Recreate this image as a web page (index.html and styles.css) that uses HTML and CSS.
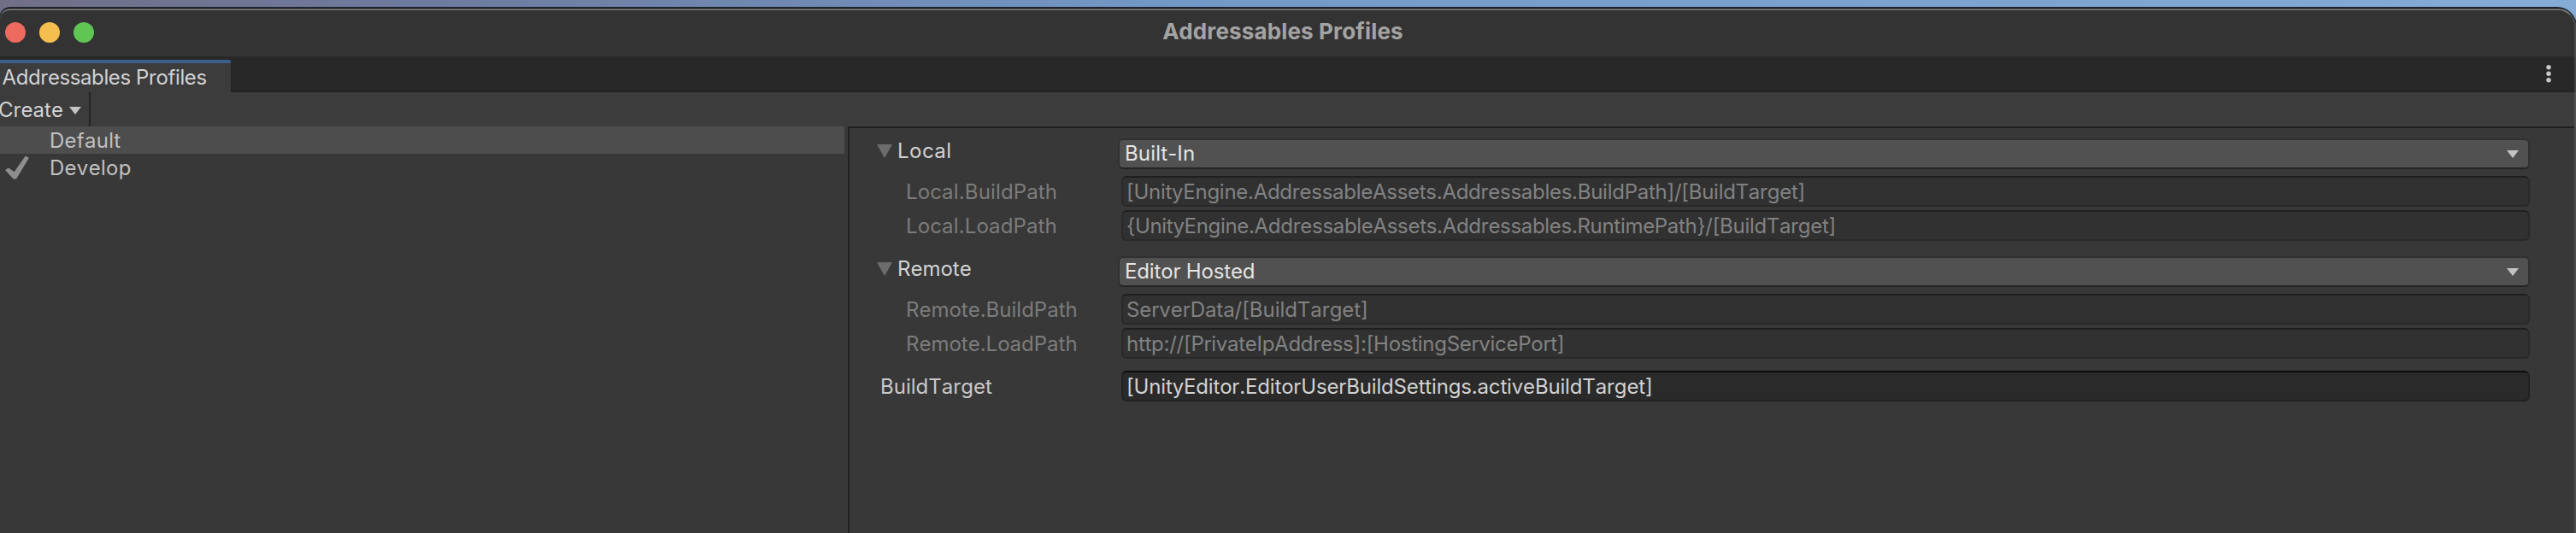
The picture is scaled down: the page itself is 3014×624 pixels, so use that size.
FILE: index.html
```
<!DOCTYPE html>
<html lang="en">
<head>
<meta charset="utf-8">
<title>Addressables Profiles</title>
<link rel="stylesheet" href="styles.css">
</head>
<body>
<div class="desktop">
  <main class="window">
    <header class="titlebar">
      <div class="lights"><i class="light red"></i><i class="light yellow"></i><i class="light green"></i></div>
      <h1 class="title">Addressables Profiles</h1>
    </header>
    <nav class="tabs">
      <div class="tab">Addressables Profiles</div>
      <svg class="kebab" width="6" height="22" viewBox="0 0 6 22"><circle cx="3" cy="2.7" r="2.7"/><circle cx="3" cy="10.2" r="2.7"/><circle cx="3" cy="17.7" r="2.7"/></svg>
    </nav>
    <div class="toolbar">
      <div class="create"><span>Create</span><svg class="arrow" width="14" height="9" viewBox="0 0 14 9"><path d="M0 0H14L7 9Z"/></svg></div>
    </div>
    <div class="content">
      <aside class="profiles">
        <div class="profile selected"><span>Default</span></div>
        <div class="profile"><svg class="check" width="58" height="32" viewBox="0 0 58 32"><path d="M6 19L10 16.5L16.7 21.3L29.7 2.5L34 4.7L19 29.5H15.5Z"/></svg><span>Develop</span></div>
      </aside>
      <section class="details">
        <div class="row head">
          <div class="fold"><svg width="18" height="16" viewBox="0 0 18 16"><path d="M0 0H18L9 16Z"/></svg><span class="loose">Local</span></div>
          <div class="select"><span>Built-In</span><svg class="arrow" width="14" height="9" viewBox="0 0 14 9"><path d="M0 0H14L7 9Z"/></svg></div>
        </div>
        <div class="row muted"><div class="label local">Local.BuildPath</div><div class="field">[UnityEngine.AddressableAssets.Addressables.BuildPath]/[BuildTarget]</div></div>
        <div class="row muted"><div class="label local">Local.LoadPath</div><div class="field runtime">{UnityEngine.AddressableAssets.Addressables.RuntimePath}/[BuildTarget]</div></div>
        <div class="row head second">
          <div class="fold"><svg width="18" height="16" viewBox="0 0 18 16"><path d="M0 0H18L9 16Z"/></svg><span>Remote</span></div>
          <div class="select"><span class="snug">Editor Hosted</span><svg class="arrow" width="14" height="9" viewBox="0 0 14 9"><path d="M0 0H14L7 9Z"/></svg></div>
        </div>
        <div class="row muted"><div class="label">Remote.BuildPath</div><div class="field server">ServerData/[BuildTarget]</div></div>
        <div class="row muted"><div class="label">Remote.LoadPath</div><div class="field">http://[PrivateIpAddress]:[HostingServicePort]</div></div>
        <div class="row target"><div class="label">BuildTarget</div><div class="field snug">[UnityEditor.EditorUserBuildSettings.activeBuildTarget]</div></div>
      </section>
    </div>
  </main>
</div>
</body>
</html>
```
FILE: styles.css
```
* { box-sizing: border-box; }
body { margin: 0; font: 24px/32px Inter, sans-serif; font-kerning: none; color: #c8c8c8; }
svg { display: block; flex: none; }
.desktop { height: 624px; padding-top: 9px; overflow: hidden; background: linear-gradient(90deg, #716f86 0, #6e7b9f 500px, #7399c8 1400px, #84acd5 100%); }
.window { height: 640px; display: flex; flex-direction: column; background: #383838; border-top: 1px solid #050505; border-radius: 12px 22px 0 0; box-shadow: inset -2px 0 #4e4e4e, 0 0 0 1px #26303f; }
.titlebar { height: 56px; flex: none; display: flex; align-items: center; background: #333; border-top: 2px solid #747474; border-right: 2px solid #4b4b4b; border-radius: 12px 21px 0 0; }
.lights { display: flex; gap: 16px; padding-left: 6px; margin-top: -2px; }
.light { width: 24px; height: 24px; border-radius: 50%; }
.red { background: #ed6a5e; }
.yellow { background: #f5bf4f; }
.green { background: #61c554; }
.title { flex: 1; margin: -4px 120px 0 0; text-align: center; font-size: 26px; line-height: 32px; font-weight: 700; letter-spacing: 0.15px; font-kerning: normal; color: #a3a3a3; }
.tabs { height: 42px; flex: none; display: flex; justify-content: space-between; background: #282828; border-right: 2px solid #454545; padding-right: 27px; box-shadow: inset 0 -2px #232323; }
.tab { width: 271px; height: 38px; margin-top: 4px; padding: 5px 0 0 2.5px; background: #3c3c3c; border-top: 4px solid #3a5f8a; border-right: 1px solid #232323; border-radius: 0 4px 0 0; line-height: 24px; letter-spacing: -0.4px; color: #d2d2d2; }
.kebab { margin-top: 10px; fill: #c8c8c8; }
.toolbar { height: 40px; flex: none; background: #3c3c3c; border-right: 2px solid #515151; }
.create { width: 106px; height: 40px; display: flex; align-items: center; padding-top: 1px; border-right: 2px solid #232323; color: #d2d2d2; }
.create span { width: 83px; margin: 1px 0 0 -2px; }
.arrow { fill: #c4c4c4; margin-top: 1px; }
.content { flex: 1; display: flex; min-height: 0; }
.profiles { width: 992px; flex: none; }
.profile { width: 988px; height: 32px; padding-left: 58px; display: flex; line-height: 34px; letter-spacing: 0.28px; color: #c0c0c0; }
.selected { background: #4d4d4d; }
.check { margin-left: -58px; fill: #8e8e8e; }
.details { flex: 1; min-width: 0; margin-right: 2px; border-left: 2px solid #202020; border-top: 2px solid #202020; padding: 12px 52px 0 0; }
.row { display: flex; height: 36px; margin-bottom: 4px; }
.head { margin-bottom: 8px; }
.second { margin-top: 18px; }
.target { margin-top: 14px; }
.fold { width: 314px; flex: none; padding-left: 32px; display: flex; gap: 6px; line-height: 30px; color: #d2d2d2; }
.fold svg { margin-top: 7px; fill: #6c6c6c; }
.loose { letter-spacing: 0.5px; }
.select { flex: 1; display: flex; align-items: center; justify-content: space-between; background: #515151; border: 2px solid #303030; border-bottom-color: #242424; border-radius: 6px; padding: 0 11px 0 6px; letter-spacing: 0.16px; color: #e4e4e4; }
.label { width: 318px; flex: none; padding-left: 66px; line-height: 38px; }
.local { letter-spacing: 0.15px; }
.target .label { padding-left: 36px; }
.field { flex: 1; padding-left: 4px; border: 2px solid #292929; border-top-color: #1f1f1f; border-radius: 6px; background: #313131; line-height: 34px; letter-spacing: -0.27px; }
.runtime { letter-spacing: -0.31px; }
.snug { letter-spacing: -0.16px; }
.server { letter-spacing: -0.05px; }
.muted { color: #7c7c7c; }
.muted .field { color: #828282; }
.target .field { background: #2a2a2a; border-color: #212121; border-top-color: #0d0d0d; color: #d2d2d2; }
```
